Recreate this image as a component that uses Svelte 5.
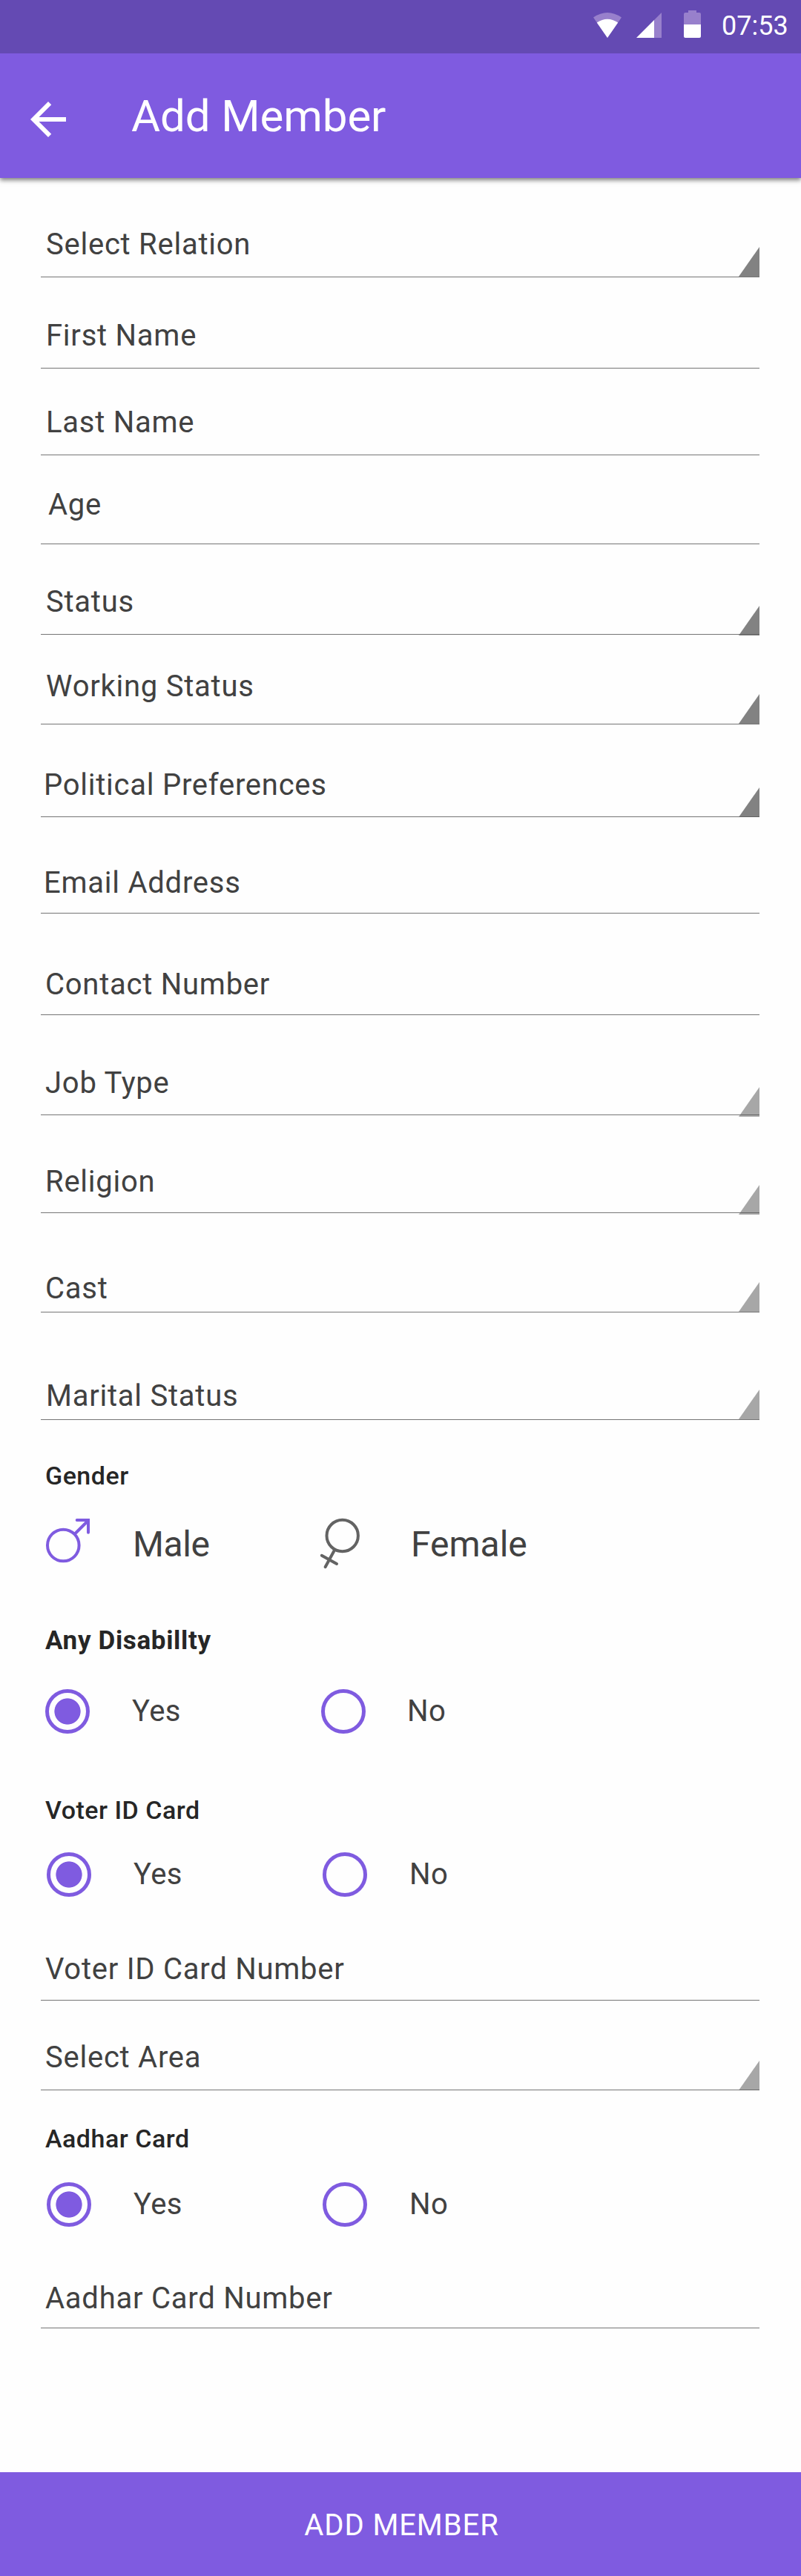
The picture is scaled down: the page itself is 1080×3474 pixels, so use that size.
<script>
  // top / bottom: space above the label and between label and underline
  const fields = [
    { label: 'Select Relation', top: 65, bottom: 18, x: 7, select: 'dark', drop: 0 },
    { label: 'First Name', top: 54, bottom: 18, x: 7 },
    { label: 'Last Name', top: 48, bottom: 18, x: 7 },
    { label: 'Age', top: 42, bottom: 27, x: 10 },
    { label: 'Status', top: 53, bottom: 18, x: 7, select: 'dark', drop: 2 },
    { label: 'Working Status', top: 45, bottom: 25, x: 7, select: 'dark', drop: 0 },
    { label: 'Political Preferences', top: 57, bottom: 17, x: 4, select: 'dark', drop: 1 },
    { label: 'Email Address', top: 64, bottom: 15, x: 4 },
    { label: 'Contact Number', top: 71, bottom: 15, x: 6 },
    { label: 'Job Type', top: 67, bottom: 17, x: 6, select: 'light', drop: 3 },
    { label: 'Religion', top: 65, bottom: 16, x: 6, select: 'light', drop: 3 },
    { label: 'Cast', top: 77, bottom: 6, x: 6, select: 'light', drop: 0 },
    { label: 'Marital Status', top: 88, bottom: 6, x: 7, select: 'light', drop: 0 }
  ];
  const voterFields = [
    { label: 'Voter ID Card Number', top: 73, bottom: 16, x: 6 },
    { label: 'Select Area', top: 52, bottom: 18, x: 6, select: 'light', drop: 1 }
  ];
  const aadharFields = [{ label: 'Aadhar Card Number', top: 72, bottom: 14, x: 6 }];
</script>

{#snippet fieldList(list)}
  {#each list as f}
    <div
      class="field"
      style:padding-top="{f.top}px"
      style:padding-bottom="{f.bottom}px"
      style:padding-left="{f.x}px"
    >
      <span>{f.label}</span>
      {#if f.select}
        <svg class="corner {f.select}" style:bottom="{-f.drop}px" width="28" height="40" viewBox="0 0 28 40">
          <path d="M28 0V40H0Z" />
        </svg>
      {/if}
    </div>
  {/each}
{/snippet}

{#snippet yesNo(cls)}
  <div class="options {cls}">
    <div class="option"><i class="radio on"></i><span>Yes</span></div>
    <div class="option"><i class="radio"></i><span>No</span></div>
  </div>
{/snippet}

<div class="screen">
  <div class="status">
    <svg width="38" height="34" viewBox="0 0 38 34">
      <path d="M0 6.5Q19-6.5 38 6.5L19 34Z" fill="#9880cc" />
      <path d="M4.8 13.4Q19 4 33.2 13.4L19 34Z" fill="#fff" />
    </svg>
    <svg class="signal" width="34" height="34" viewBox="0 0 34 34">
      <path d="M34 0V34H24V10Z" fill="#9880cc" />
      <path d="M24 10V34H0Z" fill="#fff" />
    </svg>
    <svg class="battery" width="23" height="37" viewBox="0 0 23 37">
      <path d="M6 0H17V3H21Q23 3 23 5V19H0V5Q0 3 2 3H6Z" fill="#9880cc" />
      <path d="M0 19H23V35Q23 37 21 37H2Q0 37 0 35Z" fill="#fff" />
    </svg>
    <time>07:53</time>
  </div>
  <header>
    <svg width="72" height="72" viewBox="0 0 24 24" fill="#fff">
      <path d="M20 11H7.83l5.59-5.59L12 4l-8 8 8 8 1.41-1.41L7.83 13H20v-2z" />
    </svg>
    <h1>Add Member</h1>
  </header>

  <main>
    {@render fieldList(fields)}

    <h2 class="gender-title">Gender</h2>
    <div class="genders">
      <svg width="96" height="72" viewBox="0 0 96 72" fill="none" stroke="#7f5be0" stroke-width="4" stroke-linecap="round">
        <circle cx="24.3" cy="38" r="21.3" />
        <path d="M40 22.5L57.5 5" />
        <path d="M42.7 4H58V20.7" stroke-linejoin="miter" />
      </svg>
      <span class="male">Male</span>
      <svg width="96" height="72" viewBox="0 0 96 72" fill="none" stroke="#636363" stroke-width="4" stroke-linecap="round">
        <circle cx="28.7" cy="25" r="21.2" />
        <path d="M18.3 44L5.6 67.2M.8 51.8L21 63" />
      </svg>
      <span class="female">Female</span>
    </div>

    <h2 class="disability-title">Any Disabillty</h2>
    {@render yesNo('disability')}
    <h2 class="voter-title">Voter ID Card</h2>
    {@render yesNo('voter')}
    {@render fieldList(voterFields)}
    <h2 class="aadhar-title">Aadhar Card</h2>
    {@render yesNo('aadhar')}
    {@render fieldList(aadharFields)}
  </main>

  <button>ADD MEMBER</button>
</div>

<style>
  :global(body) {
    margin: 0;
    background: #fefefe;
  }
  .screen {
    width: 1080px;
    height: 3474px;
    display: flex;
    flex-direction: column;
    font-family: Roboto, sans-serif;
    color: #414141;
    background: #fefefe;
  }
  svg {
    display: block;
    flex: none;
    overflow: visible;
  }
  .status {
    position: relative;
    z-index: 1;
    height: 72px;
    box-sizing: border-box;
    padding: 14px 17px 0 0;
    background: #644ab3;
    display: flex;
    justify-content: flex-end;
    align-items: flex-start;
  }
  .status svg {
    margin-top: 3px;
  }
  .status .signal {
    margin-left: 20px;
  }
  .status .battery {
    margin: 0 28px 0 30px;
  }
  time {
    width: 90px;
    font-size: 36px;
    line-height: 42px;
    color: #fff;
  }
  header {
    height: 168px;
    background: #7f5be0;
    box-shadow: 0 3px 6px rgba(0, 0, 0, 0.5);
    display: flex;
    align-items: flex-start;
    padding-left: 29px;
  }
  header svg {
    margin-top: 53px;
  }
  h1 {
    margin: 49px 0 0 76px;
    font-size: 60px;
    line-height: 72px;
    font-weight: 400;
    letter-spacing: -0.1px;
    color: #fff;
  }
  main {
    flex: 1;
    padding-left: 55px;
  }
  .field {
    position: relative;
    width: 969px;
    box-sizing: border-box;
    border-bottom: 1px solid #757575;
    font-size: 40px;
    line-height: 50px;
    letter-spacing: 0.75px;
  }
  .field span {
    display: block;
  }
  .corner {
    position: absolute;
    right: 0;
    fill: rgba(93, 93, 93, 0.77);
  }
  .corner.light {
    fill: rgba(93, 93, 93, 0.54);
  }
  h2 {
    margin: 0 0 0 6px;
    font-size: 34px;
    line-height: 40px;
    font-weight: 500;
    letter-spacing: 0.5px;
    color: #262626;
  }
  .gender-title {
    padding-top: 55px;
  }
  .genders {
    display: flex;
    align-items: flex-start;
    height: 72px;
    margin: 36px 0 0 6px;
    font-size: 48px;
    line-height: 56px;
  }
  .male {
    margin: 9px 0 0 22px;
    width: 254px;
    letter-spacing: -0.4px;
  }
  .female {
    margin: 9px 0 0 25px;
  }
  .disability-title {
    padding-top: 75px;
    font-size: 35px;
    font-weight: 700;
    letter-spacing: 0.65px;
  }
  .options {
    display: flex;
    height: 60px;
    font-size: 40px;
    line-height: 48px;
    letter-spacing: 0.4px;
  }
  .option {
    display: flex;
    width: 372px;
  }
  .option span {
    margin: 6px 0 0 57px;
  }
  .disability .option:last-child span {
    margin-left: 56px;
  }
  .radio {
    width: 60px;
    height: 60px;
    box-sizing: border-box;
    border: 5px solid #7f5be0;
    border-radius: 50%;
    flex: none;
  }
  .radio.on {
    background: radial-gradient(circle, #7f5be0 17.2px, transparent 18px);
  }
  .disability {
    margin: 45px 0 0 6px;
  }
  .voter-title {
    padding-top: 83px;
  }
  .voter {
    margin: 37px 0 0 8px;
  }
  .aadhar-title {
    padding-top: 45px;
  }
  .aadhar {
    margin: 39px 0 0 8px;
  }
  button {
    height: 140px;
    border: 0;
    padding: 3px 0 0 3px;
    background: #7f5be0;
    color: #fff;
    font: 400 40px/48px Roboto, sans-serif;
    letter-spacing: 0.9px;
  }
</style>
